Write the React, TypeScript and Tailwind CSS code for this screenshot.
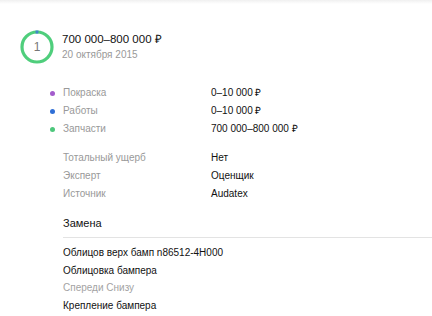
const costs = [
  { label: "Покраска", value: "0–10 000 ₽", dot: "bg-[#a35ccc]" },
  { label: "Работы", value: "0–10 000 ₽", dot: "bg-[#2f6fd6]" },
  { label: "Запчасти", value: "700 000–800 000 ₽", dot: "bg-[#4dc77c]" },
];

const info = [
  { label: "Тотальный ущерб", value: "Нет" },
  { label: "Эксперт", value: "Оценщик" },
  { label: "Источник", value: "Audatex" },
];

function Ring() {
  return (
    <svg width="34" height="34" viewBox="0 0 34 34" className="shrink-0">
      <circle cx="17" cy="17" r="15" fill="none" stroke="#4fce7c" strokeWidth="3.2" />
      <path d="M15.6 2.06 A15 15 0 0 1 18.4 2.06" fill="none" stroke="#3f86c8" strokeWidth="3.2" />
      <text x="17" y="21" textAnchor="middle" fontSize="12" fill="#777" fontFamily="Liberation Sans, Arial, sans-serif">
        1
      </text>
    </svg>
  );
}

export default function App() {
  return (
    <div className="w-[432px] h-[316px] overflow-hidden bg-white font-['Liberation_Sans',Arial,sans-serif]">
      <div className="h-[4px] bg-gradient-to-b from-[#f0f0f0] to-white" />

      <div className="flex pl-[20px] pt-[26px]">
        <Ring />
        <div className="ml-[8px] pt-[1px]">
          <div className="text-[11.5px] leading-[16px] text-[#111]">700 000–800 000 ₽</div>
          <div className="text-[10px] leading-[16px] text-[#999]">20 октября 2015</div>
        </div>
      </div>

      <div className="pl-[63px] pt-[20px]">
        {costs.map((c) => (
          <div key={c.label} className="grid grid-cols-[148px_1fr] text-[10px] leading-[18px] relative">
            <span className={`absolute left-[-13px] top-[7px] w-[5px] h-[5px] rounded-full ${c.dot}`} />
            <span className="text-[#999]">{c.label}</span>
            <span className="text-[#111]">{c.value}</span>
          </div>
        ))}

        <div className="mt-[11px]">
          {info.map((r) => (
            <div key={r.label} className="grid grid-cols-[148px_1fr] text-[10px] leading-[18px]">
              <span className="text-[#999]">{r.label}</span>
              <span className="text-[#111]">{r.value}</span>
            </div>
          ))}
        </div>

        <div className="mt-[10px] pb-[4px] border-b border-[#e3e3e3] text-[11px] leading-[20px] text-[#111]">
          Замена
        </div>

        <div className="pt-[6px] text-[10px] leading-[17.5px] text-[#111]">
          <div>Облицов верх бамп n86512-4H000</div>
          <div>Облицовка бампера</div>
          <div className="text-[#a3a3a3]">Спереди Снизу</div>
          <div>Крепление бампера</div>
        </div>
      </div>
    </div>
  );
}
